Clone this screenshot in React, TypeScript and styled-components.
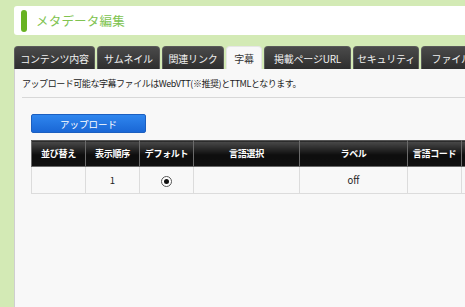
import React from "react";
import styled, { createGlobalStyle } from "styled-components";

const Global = createGlobalStyle`
  html, body { margin: 0; padding: 0; }
  body {
    background: #d3eab5;
    font-family: "Noto Sans CJK JP", "Noto Sans", sans-serif;
    overflow: hidden;
    width: 465px;
    height: 307px;
  }
`;

const Page = styled.div`
  width: 640px;
  padding: 6px 0 0 14px;
  display: flex;
  flex-direction: column;
`;

const Header = styled.div`
  height: 29px;
  background: #ffffff;
  border-radius: 3px;
  display: flex;
  align-items: center;
  padding-left: 7px;
  gap: 9px;
`;

const HeaderBar = styled.div`
  width: 6px;
  height: 22px;
  border-radius: 3px;
  background: #68b222;
`;

const Title = styled.h1`
  margin: 0;
  font-size: 12.5px;
  font-weight: normal;
  color: #80c350;
  letter-spacing: 0.2px;
`;

const TabBar = styled.div`
  display: flex;
  gap: 2px;
  margin-top: 11px;
  height: 23px;
  align-items: flex-end;
`;

const Tab = styled.div<{ $active?: boolean; $w: number }>`
  width: ${(p) => p.$w}px;
  height: 23px;
  box-sizing: border-box;
  border-radius: 4px 4px 0 0;
  display: flex;
  align-items: center;
  justify-content: center;
  font-size: 10px;
  letter-spacing: -0.2px;
  white-space: nowrap;
  overflow: hidden;
  ${(p) =>
    p.$active
      ? `background: #f8f8f8; color: #333; border: 1px solid #e6e6e6; border-bottom: none;`
      : `background: linear-gradient(#4a4a4a, #2e2e2e); color: #f0f0f0; border: 1px solid #5a5a5a; border-bottom: none;`}
`;

const Panel = styled.div`
  background: #f8f8f8;
  border-left: 1px solid #cfcfcf;
  min-height: 240px;
  padding: 0 0 0 7px;
`;

const Note = styled.p`
  margin: 0;
  height: 28px;
  line-height: 30px;
  font-size: 9px;
  color: #222;
  border-bottom: 1px solid #d8d8d8;
  letter-spacing: -0.45px;
`;

const Body = styled.div`
  padding: 16px 0 0 9px;
  display: flex;
  flex-direction: column;
  gap: 7px;
`;

const UploadButton = styled.button`
  width: 115px;
  height: 19px;
  border: 1px solid #1c5fc0;
  border-radius: 2px;
  background: linear-gradient(#2f86ee, #1a67d6);
  color: #fff;
  font-family: inherit;
  font-size: 9.5px;
  padding: 0;
`;

const Table = styled.table`
  border-collapse: collapse;
  table-layout: fixed;
  width: 520px;
`;

const Th = styled.th<{ $w: number }>`
  width: ${(p) => p.$w}px;
  height: 26px;
  padding: 0;
  box-sizing: border-box;
  background: linear-gradient(#4a4a4a, #0d0d0d 55%, #111);
  color: #fff;
  font-size: 9px;
  font-weight: bold;
  letter-spacing: -0.3px;
  border: 1px solid #6a6a6a;
  border-top-color: #555;
  white-space: nowrap;
`;

const Td = styled.td`
  height: 26px;
  padding: 0;
  text-align: center;
  font-size: 9.5px;
  color: #222;
  border: 1px solid #dcdcdc;
  background: #f8f8f8;
`;

const Radio = styled.span`
  display: inline-block;
  width: 9px;
  height: 9px;
  border: 1px solid #555;
  border-radius: 50%;
  background: #fff;
  position: relative;
  vertical-align: middle;
  &::after {
    content: "";
    position: absolute;
    left: 2px;
    top: 2px;
    width: 5px;
    height: 5px;
    border-radius: 50%;
    background: #111;
  }
`;

const tabs: [string, number][] = [
  ["コンテンツ内容", 81],
  ["サムネイル", 63],
  ["関連リンク", 62],
  ["字幕", 36],
  ["掲載ページURL", 87],
  ["セキュリティ", 66],
  ["ファイル情報", 80],
];

const cols: [string, number][] = [
  ["並び替え", 54],
  ["表示順序", 54],
  ["デフォルト", 54],
  ["言語選択", 106],
  ["ラベル", 108],
  ["言語コード", 54],
  ["", 90],
];

export default function App() {
  return (
    <>
      <Global />
      <Page>
        <Header>
          <HeaderBar />
          <Title>メタデータ編集</Title>
        </Header>
        <TabBar>
          {tabs.map(([t, w]) => (
            <Tab key={t} $w={w} $active={t === "字幕"}>
              {t}
            </Tab>
          ))}
        </TabBar>
        <Panel>
          <Note>アップロード可能な字幕ファイルはWebVTT(※推奨)とTTMLとなります。</Note>
          <Body>
            <UploadButton>アップロード</UploadButton>
            <Table>
              <thead>
                <tr>
                  {cols.map(([c, w], i) => (
                    <Th key={i} $w={w}>
                      {c}
                    </Th>
                  ))}
                </tr>
              </thead>
              <tbody>
                <tr>
                  <Td></Td>
                  <Td>1</Td>
                  <Td>
                    <Radio />
                  </Td>
                  <Td></Td>
                  <Td>off</Td>
                  <Td></Td>
                  <Td></Td>
                </tr>
              </tbody>
            </Table>
          </Body>
        </Panel>
      </Page>
    </>
  );
}
